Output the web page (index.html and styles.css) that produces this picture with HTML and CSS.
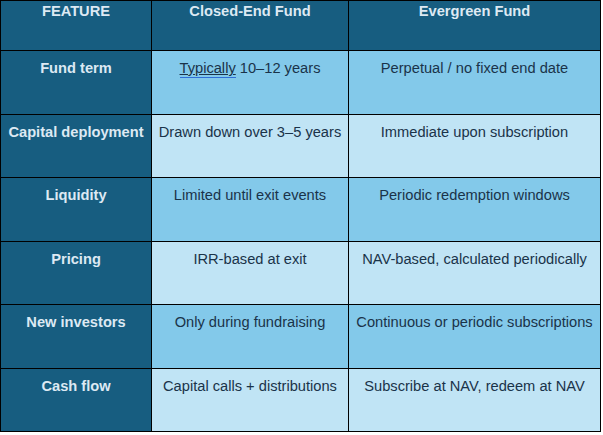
FILE: index.html
```html
<!DOCTYPE html>
<html lang="en">
<head>
<meta charset="utf-8">
<title>Closed-End vs Evergreen Fund</title>
<link rel="stylesheet" href="styles.css">
</head>
<body>
<table class="compare">
  <colgroup>
    <col class="c1">
    <col class="c2">
    <col class="c3">
  </colgroup>
  <thead>
    <tr class="head">
      <th>FEATURE</th>
      <th>Closed-End Fund</th>
      <th>Evergreen Fund</th>
    </tr>
  </thead>
  <tbody>
    <tr class="mid">
      <th>Fund term</th>
      <td><span class="mark">Typically</span> 10–12 years</td>
      <td>Perpetual / no fixed end date</td>
    </tr>
    <tr class="light">
      <th>Capital deployment</th>
      <td>Drawn down over 3–5 years</td>
      <td>Immediate upon subscription</td>
    </tr>
    <tr class="mid">
      <th>Liquidity</th>
      <td>Limited until exit events</td>
      <td>Periodic redemption windows</td>
    </tr>
    <tr class="light">
      <th>Pricing</th>
      <td>IRR-based at exit</td>
      <td>NAV-based, calculated periodically</td>
    </tr>
    <tr class="mid">
      <th>New investors</th>
      <td>Only during fundraising</td>
      <td>Continuous or periodic subscriptions</td>
    </tr>
    <tr class="light">
      <th>Cash flow</th>
      <td>Capital calls + distributions</td>
      <td>Subscribe at NAV, redeem at NAV</td>
    </tr>
  </tbody>
</table>
</body>
</html>
```
FILE: styles.css
```css
html, body {
  margin: 0;
  padding: 0;
  background: #ffffff;
}

.compare {
  border-collapse: collapse;
  table-layout: fixed;
  width: 600px;
  font-family: "Liberation Sans", Arial, sans-serif;
  font-size: 14.67px;
  line-height: 17px;
}

.c1 { width: 151px; }
.c2 { width: 197px; }
.c3 { width: 252px; }

.compare th,
.compare td {
  border: 1px solid #000000;
  text-align: center;
  vertical-align: top;
  padding: 9px 2px 0;
}

.compare th {
  background: #175d80;
  color: #dde9f3;
  font-weight: bold;
}

.compare td {
  color: #1a3349;
}

.head th {
  height: 50px;
  padding-top: 2px;
  box-sizing: border-box;
}

.compare tbody tr {
  height: 63.5px;
}

.mid td { background: #83c9ea; }
.light td { background: #c0e4f5; }

.mark {
  text-decoration: underline;
  text-decoration-color: #1a3349;
  text-underline-offset: 1px;
  border-bottom: 1px solid #2f6fd6;
  padding-bottom: 1px;
}
```
